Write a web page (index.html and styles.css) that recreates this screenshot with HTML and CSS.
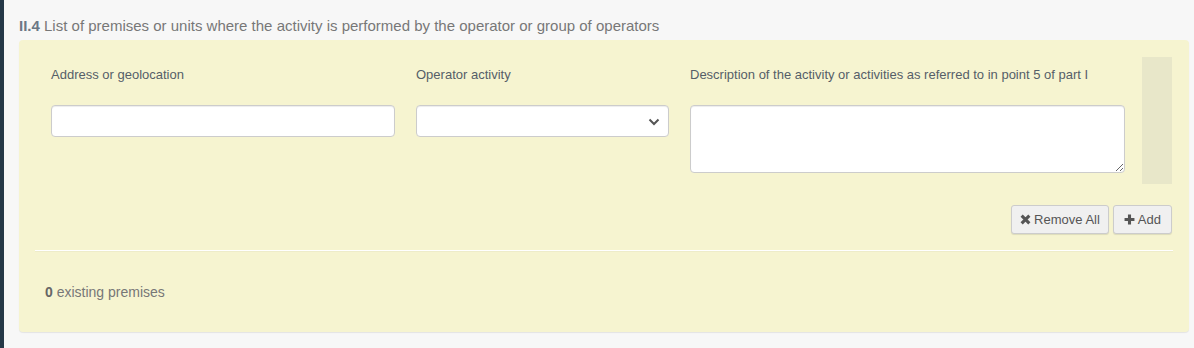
FILE: index.html
```html
<!DOCTYPE html>
<html lang="en">
<head>
    <meta charset="UTF-8">
    <title>II.4 Premises</title>
    <link rel="stylesheet" href="styles.css">
</head>
<body>
    <div class="sidebar"></div>
    <div class="main">
        <h2 class="section-title"><b>II.4</b> List of premises or units where the activity is performed by the operator or group of operators</h2>
        <div class="panel">
            <div class="entry">
                <div class="fields">
                    <div class="field field-address">
                        <label for="address">Address or geolocation</label>
                        <input type="text" id="address" class="form-control">
                    </div>
                    <div class="field field-activity">
                        <label for="activity">Operator activity</label>
                        <div class="select-wrap">
                            <select id="activity" class="form-control">
                                <option value=""></option>
                            </select>
                            <svg class="chevron" width="12" height="8" viewBox="0 0 12 8"><path d="M1.5 1.5 L6 6 L10.5 1.5" fill="none" stroke="#555" stroke-width="2"/></svg>
                        </div>
                    </div>
                    <div class="field field-desc">
                        <label for="desc">Description of the activity or activities as referred to in point 5 of part I</label>
                        <textarea id="desc" class="form-control"></textarea>
                    </div>
                </div>
                <div class="entry-side"></div>
            </div>
            <div class="actions">
                <button type="button" class="btn">
                    <svg width="11" height="11" viewBox="0 0 10 10"><path d="M1.5 1.5 L8.5 8.5 M8.5 1.5 L1.5 8.5" stroke="#555" stroke-width="2.8"/></svg>
                    Remove All
                </button>
                <button type="button" class="btn btn-add">
                    <svg width="11" height="11" viewBox="0 0 10 10"><path d="M5 0.5 V9.5 M0.5 5 H9.5" stroke="#555" stroke-width="2.8"/></svg>
                    Add
                </button>
            </div>
            <hr class="divider">
            <p class="count"><b>0</b> existing premises</p>
        </div>
    </div>
</body>
</html>
```

FILE: styles.css
```css
body {
    margin: 0;
    padding: 0;
    background-color: #f7f7f7;
    font-family: "Liberation Sans", Arial, sans-serif;
    color: #777;
    display: flex;
    min-height: 348px;
}
.sidebar {
    width: 4px;
    background: #253847;
}
.main {
    flex: 1;
    padding: 16px 5px 0 15px;
}
.section-title {
    margin: 0 0 4px 0;
    font-size: 15px;
    line-height: 20px;
    font-weight: normal;
    color: #777;
}
.section-title b {
    color: #6b7785;
}
.panel {
    background: #f6f4d0;
    border-radius: 4px;
    box-shadow: 0 1px 1px rgba(0, 0, 0, 0.08);
    padding: 17px 16px 30px 16px;
}
.entry {
    display: flex;
    gap: 17px;
}
.fields {
    flex: 1;
    display: flex;
    gap: 21px;
    padding: 8px 0 11px 16px;
}
.field label {
    display: block;
    font-size: 13px;
    line-height: 20px;
    color: #555e68;
    margin-bottom: 20px;
}
.field-address {
    width: 344px;
}
.field-activity {
    width: 253px;
}
.field-desc {
    width: 435px;
}
.entry-side {
    width: 30px;
    background: #e8e7c9;
    margin-right: 1px;
}
.form-control {
    display: block;
    width: 100%;
    box-sizing: border-box;
    height: 32px;
    padding: 6px 10px;
    font-size: 13px;
    font-family: inherit;
    background: #fff;
    border: 1px solid #ccc;
    border-radius: 4px;
    box-shadow: inset 0 1px 1px rgba(0, 0, 0, 0.075);
    margin: 0;
}
select.form-control {
    appearance: none;
}
textarea.form-control {
    height: 68px;
    resize: vertical;
}
.select-wrap {
    position: relative;
}
.chevron {
    position: absolute;
    right: 9px;
    top: 13px;
}
.actions {
    display: flex;
    justify-content: flex-end;
    gap: 4px;
    margin: 21px 1px 0 0;
}
.btn {
    display: flex;
    align-items: center;
    gap: 3px;
    height: 29px;
    padding: 0 8px;
    font-family: inherit;
    font-size: 13px;
    color: #555;
    background: #f0f0f0;
    border: 1px solid #ccc;
    border-radius: 3px;
    box-shadow: 0 1px 1px rgba(0, 0, 0, 0.1);
    cursor: pointer;
}
.btn-add {
    padding: 0 10px;
}
.divider {
    border: none;
    border-top: 1px solid #fff;
    box-shadow: 0 1px 0 rgba(0, 0, 0, 0.03);
    margin: 16px 0 0 0;
}
.count {
    margin: 31px 0 0 10px;
    font-size: 14px;
    line-height: 20px;
    color: #777;
}
.count b {
    color: #666;
}
```
